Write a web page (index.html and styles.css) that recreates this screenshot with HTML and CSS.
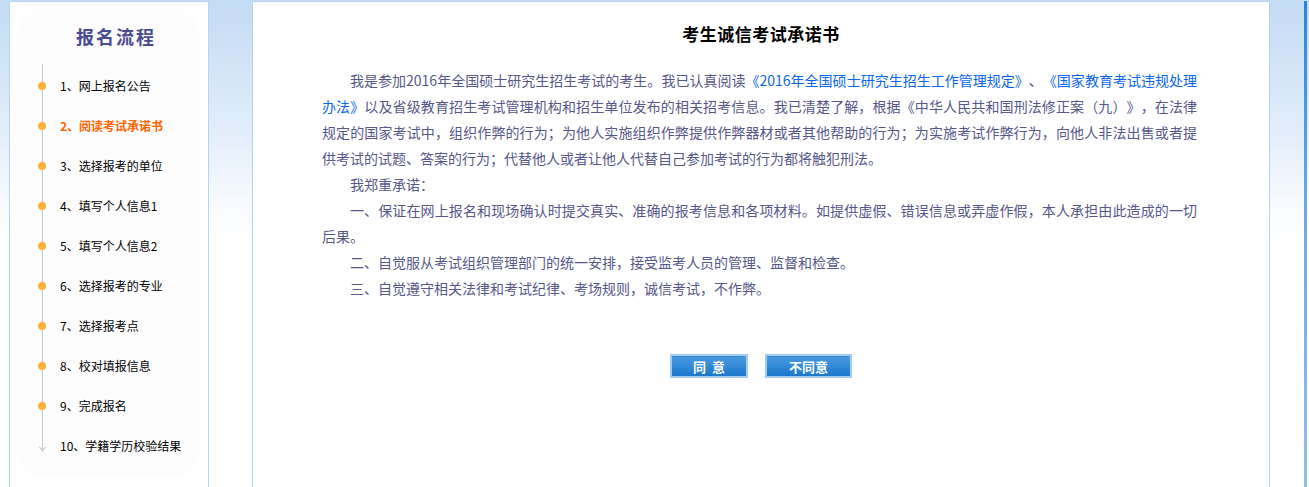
FILE: index.html
```html
<!DOCTYPE html>
<html lang="zh-CN">
<head>
  <meta charset="UTF-8" />
  <meta name="viewport" content="width=device-width, initial-scale=1.0" />
  <title>考生诚信考试承诺书</title>
  <link rel="stylesheet" href="styles.css">
</head>
<body>
  <div class="page">
    <div class="side">
      <div class="side-inner">
        <h2 class="side-title">报名流程</h2>
        <ul class="steps">
          <li>1、网上报名公告</li>
          <li class="active">2、阅读考试承诺书</li>
          <li>3、选择报考的单位</li>
          <li>4、填写个人信息1</li>
          <li>5、填写个人信息2</li>
          <li>6、选择报考的专业</li>
          <li>7、选择报考点</li>
          <li>8、校对填报信息</li>
          <li>9、完成报名</li>
          <li class="last">10、学籍学历校验结果</li>
        </ul>
      </div>
    </div>

    <div class="main">
      <h1 class="main-title">考生诚信考试承诺书</h1>
      <div class="promise">
        <p>我是参加2016年全国硕士研究生招生考试的考生。我已认真阅读<a href="#">《2016年全国硕士研究生招生工作管理规定》</a>、<a href="#">《国家教育考试违规处理办法》</a>以及省级教育招生考试管理机构和招生单位发布的相关招考信息。我已清楚了解，根据《中华人民共和国刑法修正案（九）》，在法律规定的国家考试中，组织作弊的行为；为他人实施组织作弊提供作弊器材或者其他帮助的行为；为实施考试作弊行为，向他人非法出售或者提供考试的试题、答案的行为；代替他人或者让他人代替自己参加考试的行为都将触犯刑法。</p>
        <p>我郑重承诺：</p>
        <p>一、保证在网上报名和现场确认时提交真实、准确的报考信息和各项材料。如提供虚假、错误信息或弄虚作假，本人承担由此造成的一切后果。</p>
        <p>二、自觉服从考试组织管理部门的统一安排，接受监考人员的管理、监督和检查。</p>
        <p>三、自觉遵守相关法律和考试纪律、考场规则，诚信考试，不作弊。</p>
      </div>
      <div class="actions">
        <button class="btn btn-agree">同&nbsp;&nbsp;意</button>
        <button class="btn btn-deny">不同意</button>
      </div>
    </div>

    <div class="edge"></div>
  </div>
</body>
</html>
```

FILE: styles.css
```css
html, body {
  margin: 0;
  height: 100%;
  overflow: hidden;
}
body {
  font-family: "Noto Sans CJK SC", "Liberation Sans", sans-serif;
  font-size: 12px;
  background: linear-gradient(to bottom, #c3dbf3 0px, #dceafa 110px, #f6f9fe 200px, #ffffff 240px);
  text-spacing-trim: space-all;
}
.page {
  display: flex;
  align-items: flex-start;
  padding: 1px 0 0 9px;
}

/* left steps panel */
.side {
  width: 198px;
  min-height: 540px;
  background: #fff;
  border: 1px solid #b6d3ef;
  flex-shrink: 0;
}
.side-inner {
  margin: 10px 12px 0 10px;
  padding-top: 12px;
  height: 450px;
  background: #fdfdfd;
  border-radius: 24px;
  box-shadow: 0 0 10px #f8f8f8;
}
.side-title {
  margin: 0 0 18px 0;
  padding-left: 16px;
  text-align: center;
  font-size: 18px;
  line-height: 24px;
  letter-spacing: 2px;
  color: #4b4b92;
  font-weight: bold;
}
.steps {
  list-style: none;
  margin: 0;
  padding: 0 0 0 40px;
  position: relative;
}
.steps::before {
  content: "";
  position: absolute;
  left: 22px;
  top: -2px;
  bottom: 14px;
  width: 1px;
  background: #c9c9c9;
}
.steps li {
  position: relative;
  height: 40px;
  line-height: 40px;
  color: #000;
  font-size: 12px;
}
.steps li::before {
  content: "";
  position: absolute;
  left: -22px;
  top: 16px;
  width: 8px;
  height: 8px;
  border-radius: 50%;
  background: #fdb03a;
}
.steps li.last::before {
  left: -20px;
  top: 19px;
  width: 4px;
  height: 4px;
  border-radius: 0;
  background: none;
  border-right: 1px solid #c9c9c9;
  border-bottom: 1px solid #c9c9c9;
  transform: rotate(45deg);
}
.steps li.active {
  color: #ff6600;
  font-weight: bold;
}

/* main promise panel */
.main {
  width: 1016px;
  min-height: 540px;
  margin-left: 43px;
  background: #fff;
  border: 1px solid #b6d3ef;
  flex-shrink: 0;
}
.main-title {
  margin: 20px 0 21px 0;
  text-align: center;
  font-size: 17px;
  line-height: 24px;
  letter-spacing: 0.5px;
  color: #000;
  font-weight: bold;
}
.promise {
  padding: 0 72px 0 69px;
}
.promise p {
  margin: 0;
  text-indent: 28px;
  font-size: 14px;
  line-height: 26px;
  color: #57578a;
  text-align: justify;
}
.promise a {
  color: #0a66ee;
  text-decoration: none;
}
.actions {
  display: flex;
  justify-content: center;
  gap: 17px;
  margin-top: 53px;
}
.btn {
  height: 24px;
  padding: 0;
  border: 2px solid #a3ccef;
  background: linear-gradient(to bottom, #4c9ce1, #1a77cb);
  box-shadow: inset 0 1px 0 #3b8bd7;
  color: #fff;
  font-family: inherit;
  font-size: 13px;
  font-weight: bold;
  cursor: pointer;
}
.btn-agree {
  width: 78px;
}
.btn-deny {
  width: 87px;
}

/* right edge bar */
.edge {
  width: 3px;
  height: 487px;
  margin-left: 34px;
  background: linear-gradient(to bottom, #2b83d5, #6aaae3 200px, #91c1ea);
  flex-shrink: 0;
}
```
